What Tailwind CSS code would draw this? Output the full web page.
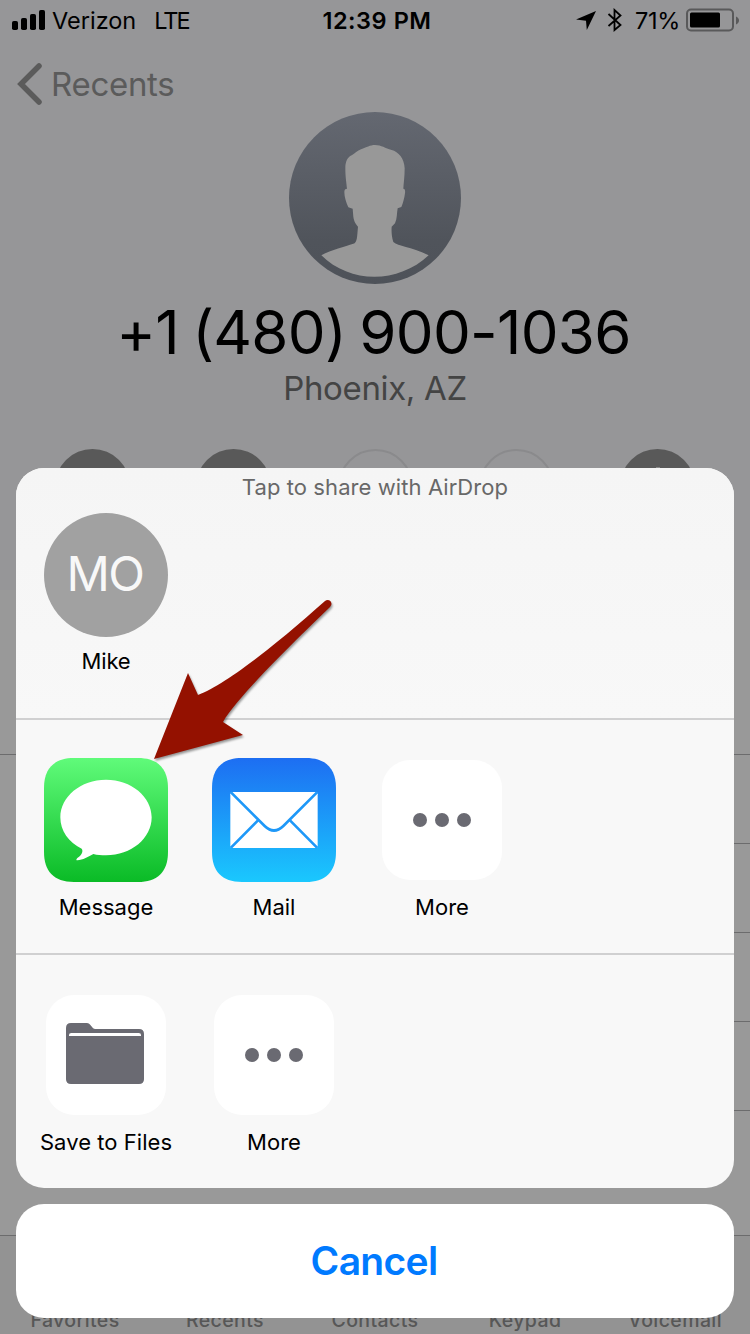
<!DOCTYPE html>
<html lang="en">
<head>
<meta charset="utf-8">
<title>Share</title>
<script src="https://cdn.jsdelivr.net/npm/@tailwindcss/browser@4"></script>
</head>
<body class="font-['Inter','Liberation_Sans',sans-serif] text-black">
<div class="relative w-[750px] h-[1334px] overflow-hidden bg-[#999999]">

  <!-- Contact page, dimmed -->
  <div class="flex flex-col h-full">
    <header class="h-[590px] shrink-0 bg-[#969698] flex flex-col">
      <div class="h-10 shrink-0 grid grid-cols-3 text-[23.5px] leading-10">
        <div class="h-10 flex items-center pl-3">
          <svg class="w-[33px] h-5 shrink-0" viewBox="0 0 33 20"><rect x="0" y="11" width="6" height="9" rx="1.8"/><rect x="9" y="8" width="6" height="12" rx="1.8"/><rect x="18" y="4" width="6" height="16" rx="1.8"/><rect x="27" y="0" width="6" height="20" rx="1.8"/></svg>
          <span class="pl-[7px] pt-0.5 tracking-[0px]">Verizon</span>
          <span class="pl-[18px] pt-0.5 tracking-[-2px]">LTE</span>
        </div>
        <div class="h-10 text-center font-semibold pt-px pl-1 tracking-[0.55px]">12:39 PM</div>
        <div class="h-10 flex items-center justify-end pr-[11px]">
          <svg class="w-5 h-5 shrink-0" viewBox="0 0 20 20"><path d="M20 1 10.8 20 10 10.8 0 9.500Z"/></svg>
          <svg class="w-4 h-6 shrink-0 ml-[11px]" viewBox="0 0 16 24" fill="none" stroke="#000" stroke-width="1.8"><path d="M1.500 6 13.500 17 7.500 22V2l6 5.500L1.500 18"/></svg>
          <span class="pl-[12px] pt-0.5 tracking-[-0.3px]">71%</span>
          <svg class="w-[53px] h-6 shrink-0 ml-[6px]" viewBox="0 0 53 24"><rect x="1" y="1.500" width="46" height="21" rx="4" fill="none" stroke="#59595a" stroke-width="2"/><rect x="4" y="4.500" width="30" height="15" rx="1.500"/><path d="M50 8.500c4 1.500 4 6.500 0 8Z" fill="#59595a"/></svg>
        </div>
      </div>
      <div class="h-[72px] shrink-0 flex pl-[17px] pt-[22px] text-[#5b5b5b]">
        <svg class="w-[26px] h-[44px] shrink-0" viewBox="0 0 26 44" fill="none" stroke="#5b5b5b" stroke-width="5.500" stroke-linecap="round" stroke-linejoin="miter"><path d="M22 4 4 22 22 40"/></svg>
        <span class="pl-2 text-[33px] leading-[44px] tracking-[-0.3px]">Recents</span>
      </div>
      <svg class="w-[172px] h-[172px] shrink-0 self-center" viewBox="57 36 516 516">
        <defs><linearGradient id="av" x1="0" y1="0" x2="0" y2="1"><stop offset="0" stop-color="#646871"/><stop offset=".75" stop-color="#50545b"/><stop offset="1" stop-color="#4e5259"/></linearGradient></defs>
        <circle cx="315" cy="294" r="258" fill="url(#av)"/>
        <path fill="#989898" d="M315 135C335 135 345 145 365 150C385 155 403 175 404 205C404 230 401 250 400 266C405 266 406 272 405 280C403 295 399 310 394 321L383 325C380 340 382 355 375 370L365 380C364 395 365 410 370 426C385 440 420 438 476 466C385 552 240 552 154 466C185 448 225 440 250 431C262 428 261 410 264 380C258 372 252 365 250 350L248 326L235 322C228 307 223 290 223 276C223 268 226 266 231 266C229 245 226 230 226 205C226 185 232 172 245 166C255 160 262 152 273 148C290 142 300 135 315 135Z"/>
      </svg>
      <div class="text-center text-[60px] leading-[70px] mt-[13px] pr-[3px] tracking-[-0.7px] [word-spacing:-3px] whitespace-pre">+1 (480) 900-1036</div>
      <div class="text-center text-[33px] leading-[40px] mt-px mb-px tracking-[-0.35px]"><span class="text-[#444444]">Phoenix, AZ</span></div>
      <div class="flex justify-between px-[55px] mt-10">
        <div class="size-[75px] rounded-full bg-[#595959]"></div>
        <div class="size-[75px] rounded-full bg-[#595959]"></div>
        <div class="size-[75px] rounded-full border-2 border-[#8a8a8c]"></div>
        <div class="size-[75px] rounded-full border-2 border-[#8a8a8c]"></div>
        <div class="size-[75px] rounded-full bg-[#595959] flex justify-center pt-[18px]"><div class="w-1 h-4 bg-[#888]"></div></div>
      </div>
    </header>
    <div class="h-[165px] shrink-0 border-b border-[#6c6c6d]"></div>
    <div class="h-[89px] shrink-0 ml-8 border-b border-[#6c6c6d]"></div>
    <div class="h-[89px] shrink-0 ml-8 border-b border-[#6c6c6d]"></div>
    <div class="h-[89px] shrink-0 ml-8 border-b border-[#6c6c6d]"></div>
    <div class="h-[89px] shrink-0 ml-8 border-b border-[#6c6c6d]"></div>
    <div class="h-[124px] shrink-0"></div>
    <nav class="h-[99px] shrink-0 border-t border-[#6c6c6d] bg-[#939393] grid grid-cols-5 items-end pb-0.5 text-center text-[19.5px] leading-6 font-medium text-[#575757] tracking-[0.4px]">
      <span>Favorites</span><span>Recents</span><span>Contacts</span><span>Keypad</span><span>Voicemail</span>
    </nav>
  </div>

  <!-- Share sheet -->
  <div class="absolute inset-x-4 top-[468px] flex flex-col gap-4 text-[22px]">
    <div class="h-[720px] rounded-[28px] bg-[#f8f8f8] flex flex-col overflow-hidden">
      <section class="h-[252px] shrink-0 border-b-2 border-[#d0d0d1] bg-linear-to-b from-[#f5f5f5] to-[#f8f8f8]">
        <div class="text-center leading-[38px] text-[#686868] tracking-[0.08px]">Tap to share with AirDrop</div>
        <div class="w-[124px] ml-7 mt-[7px] flex flex-col items-center">
          <div class="size-[124px] rounded-full bg-[#a1a1a1] text-[#f8f8f8] text-[48px] font-normal leading-[121px] text-center tracking-[-1.5px] pr-0.5">MO</div>
          <div class="leading-8 mt-2 tracking-[-0.2px]">Mike</div>
        </div>
      </section>
      <section class="h-[235px] shrink-0 border-b-2 border-[#d0d0d1] flex gap-11 pl-7 pt-[38px]">
        <div class="w-[124px] flex flex-col items-center">
          <svg class="w-[124px] h-[124px]" viewBox="0 0 372 372">
            <defs><linearGradient id="msg" x1="0" y1="0" x2="0" y2="1"><stop offset="0" stop-color="#60fb7a"/><stop offset="1" stop-color="#0abb26"/></linearGradient></defs>
            <path fill="url(#msg)" d="M90 0H282C344 0 372 34 372 90V282C372 344 338 372 282 372H90C28 372 0 338 0 282V90C0 28 34 0 90 0Z"/>
            <path fill="#fff" d="M186 65C262 65 323 116 323 178C323 241 262 292 186 292C172 292 160 291 148 288C134 296 116 306 100 307C96 307 96 304 100 300C112 292 119 280 113 272C74 254 49 218 49 178C49 116 110 65 186 65Z"/>
          </svg>
          <div class="leading-8 mt-[9px] tracking-[0px]">Message</div>
        </div>
        <div class="w-[124px] flex flex-col items-center">
          <svg class="w-[124px] h-[124px]" viewBox="0 0 372 372">
            <defs><linearGradient id="mail" x1="0" y1="0" x2="0" y2="1"><stop offset="0" stop-color="#1d6ef2"/><stop offset="1" stop-color="#1ac8fe"/></linearGradient></defs>
            <path fill="url(#mail)" d="M90 0H282C344 0 372 34 372 90V282C372 344 338 372 282 372H90C28 372 0 338 0 282V90C0 28 34 0 90 0Z"/>
            <rect x="55" y="102" width="262" height="168" rx="7" fill="#fff"/>
            <g fill="none" stroke="#1e98f8" stroke-width="8"><path d="M57 103 158 204Q186 231 214 204L315 103"/><path d="M57 269 138 187M315 269 234 187"/></g>
          </svg>
          <div class="leading-8 mt-[9px] tracking-[0px]">Mail</div>
        </div>
        <div class="w-[124px] flex flex-col items-center">
          <div class="size-[120px] my-0.5 rounded-[28px] bg-white flex items-center justify-center gap-2"><i class="size-3.5 rounded-full bg-[#6a6a72]"></i><i class="size-3.5 rounded-full bg-[#6a6a72]"></i><i class="size-3.5 rounded-full bg-[#6a6a72]"></i></div>
          <div class="leading-8 mt-[9px] tracking-[0px]">More</div>
        </div>
      </section>
      <section class="flex gap-11 pl-7 pt-10">
        <div class="w-[124px] flex flex-col items-center">
          <div class="size-[120px] rounded-[28px] bg-white flex items-center justify-center">
            <svg class="w-[78px] h-[61px] -mt-[3px] -ml-0.5" viewBox="0 0 234 183"><path fill="#6a6a72" d="M15 0H62C76 0 76 18 88 18H219Q234 18 234 33V169Q234 183 219 183H15Q0 183 0 169V15Q0 0 15 0Z"/><path fill="#fff" d="M9 39V36Q9 30 16 30H218Q225 30 225 36V39Z"/></svg>
          </div>
          <div class="leading-8 mt-[11px] tracking-[0.05px] whitespace-nowrap">Save to Files</div>
        </div>
        <div class="w-[124px] flex flex-col items-center">
          <div class="size-[120px] rounded-[28px] bg-white flex items-center justify-center gap-2"><i class="size-3.5 rounded-full bg-[#6a6a72]"></i><i class="size-3.5 rounded-full bg-[#6a6a72]"></i><i class="size-3.5 rounded-full bg-[#6a6a72]"></i></div>
          <div class="leading-8 mt-[11px] tracking-[0px]">More</div>
        </div>
      </section>
    </div>
    <button class="h-[114px] rounded-[28px] bg-white text-[#007aff] text-[39px] font-semibold tracking-[-0.7px] pr-2 pl-1.5">Cancel</button>
  </div>

  <!-- Pointer arrow -->
  <svg class="absolute left-[144px] top-[590px] w-[200px] h-[180px] drop-shadow-[1px_2px_1px_rgb(0_0_0/0.4)]" viewBox="144 590 200 180"><path fill="#941100" d="M154 759 188 673 198 695C226 685 279 642 325 601C329 598 334 603 330 607C299 637 237 697 223 722L243 735Z"/></svg>
</div>
</body>
</html>
